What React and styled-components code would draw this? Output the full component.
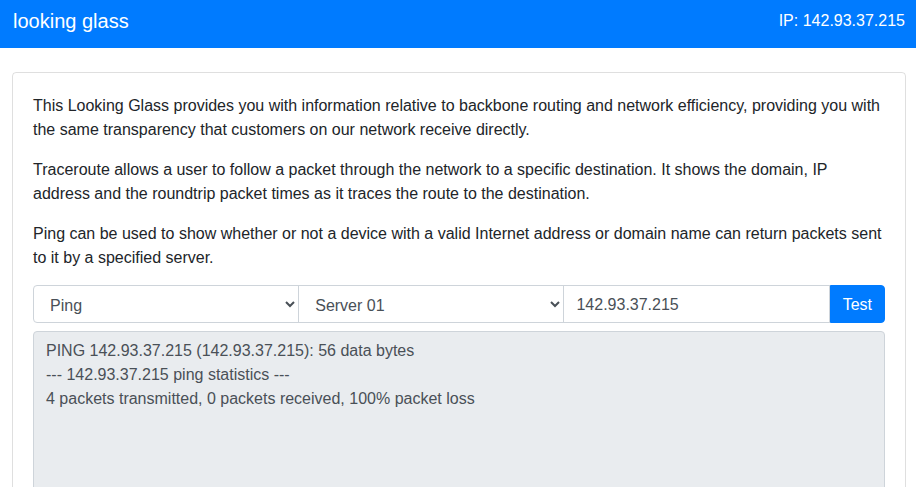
import React from 'react'
import styled, { createGlobalStyle } from 'styled-components'

const GlobalStyle = createGlobalStyle`
  * { box-sizing: border-box; }
  html, body {
    margin: 0;
    padding: 0;
    background: #fff;
    color: #212529;
    font-family: "Liberation Sans", Arial, sans-serif;
    font-size: 16px;
    line-height: 1.5;
  }
`

const Navbar = styled.nav`
  display: flex;
  justify-content: space-between;
  align-items: flex-start;
  height: 48px;
  padding: 9px 11px 0 13px;
  background: #007bff;
  color: #fff;
`

const Brand = styled.span`
  font-size: 20px;
  line-height: 24px;
`

const Address = styled.span`
  font-size: 16px;
  line-height: 24px;
`

const Main = styled.main`
  padding: 24px 10px 0 12px;
`

const Card = styled.section`
  border: 1px solid rgba(0, 0, 0, 0.125);
  border-radius: 4px;
  padding: 20px;
`

const Text = styled.p`
  margin: 0 0 15px;
  padding-top: 1px;
`

const InputGroup = styled.div`
  display: flex;
  height: 38px;
`

const Select = styled.select`
  flex: 1 1 0;
  min-width: 0;
  height: 38px;
  margin: 0;
  margin-left: ${p => (p.$first ? '0' : '-1px')};
  padding: 7px 12px 5px;
  border: 1px solid #ced4da;
  border-radius: ${p => (p.$first ? '4px 0 0 4px' : '0')};
  background: #fff;
  color: #495057;
  font-family: inherit;
  font-size: 16px;
`

const Input = styled.input`
  flex: 1 1 0;
  min-width: 0;
  height: 38px;
  margin: 0 0 0 -1px;
  padding: 7px 12px 5px;
  border: 1px solid #ced4da;
  border-radius: 0;
  color: #495057;
  font-family: inherit;
  font-size: 16px;
  outline: none;
`

const Button = styled.button`
  flex: 0 0 55px;
  height: 38px;
  padding: 7px 12px 5px;
  border: 1px solid #007bff;
  border-radius: 0 4px 4px 0;
  background: #007bff;
  color: #fff;
  font-family: inherit;
  font-size: 16px;
  line-height: 24px;
`

const Output = styled.textarea`
  display: block;
  width: 100%;
  height: 260px;
  margin-top: 8px;
  padding: 7px 12px 5px;
  border: 1px solid #ced4da;
  border-radius: 4px;
  background: #e9ecef;
  color: #495057;
  font-family: inherit;
  font-size: 16px;
  line-height: 24px;
  resize: vertical;
  outline: none;
`

const result = `PING 142.93.37.215 (142.93.37.215): 56 data bytes
--- 142.93.37.215 ping statistics ---
4 packets transmitted, 0 packets received, 100% packet loss`

export default function App() {
  return (
    <>
      <GlobalStyle />
      <Navbar>
        <Brand>looking glass</Brand>
        <Address>IP: 142.93.37.215</Address>
      </Navbar>
      <Main>
        <Card>
          <Text>
            This Looking Glass provides you with information relative to backbone routing and network
            efficiency, providing you with the same transparency that customers on our network receive directly.
          </Text>
          <Text>
            Traceroute allows a user to follow a packet through the network to a specific destination. It
            shows the domain, IP address and the roundtrip packet times as it traces the route to the destination.
          </Text>
          <Text>
            Ping can be used to show whether or not a device with a valid Internet address or domain name can
            return packets sent to it by a specified server.
          </Text>
          <InputGroup>
            <Select $first defaultValue="ping">
              <option value="ping">Ping</option>
              <option value="traceroute">Traceroute</option>
            </Select>
            <Select defaultValue="s1">
              <option value="s1">Server 01</option>
              <option value="s2">Server 02</option>
            </Select>
            <Input type="text" defaultValue="142.93.37.215" />
            <Button>Test</Button>
          </InputGroup>
          <Output readOnly value={result} />
        </Card>
      </Main>
    </>
  )
}
